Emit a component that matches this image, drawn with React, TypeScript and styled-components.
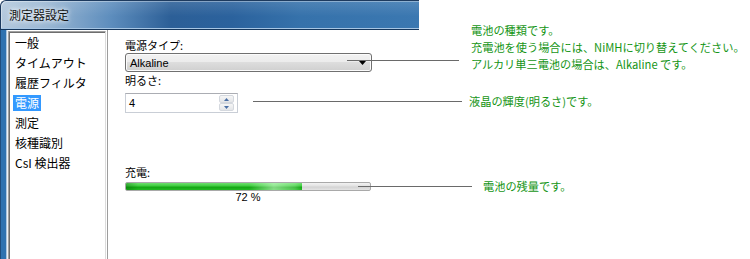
import React from 'react';
import styled, { createGlobalStyle } from 'styled-components';

const GlobalStyle = createGlobalStyle`
  html, body {
    margin: 0;
    padding: 0;
    background: #fff;
  }
  body {
    font-family: "Liberation Sans", "Noto Sans CJK JP", sans-serif;
    color: #000;
  }
`;

const Stage = styled.div`
  position: relative;
  width: 750px;
  height: 259px;
  overflow: hidden;
  background: #fff;
`;

const Window = styled.div`
  width: 419px;
  height: 100%;
  display: flex;
  flex-direction: column;
`;

const TitleBar = styled.div`
  box-sizing: border-box;
  flex: none;
  height: 30px;
  display: flex;
  align-items: center;
  padding: 0 0 1px 8px;
  border-top: 1px solid #1d3a5e;
  border-left: 1px solid #1d3a5e;
  border-bottom: 1px solid #16375c;
  border-top-left-radius: 6px;
  box-shadow: inset 0 -1px 0 #a7c6e4, inset 1px 1px 0 rgba(255, 255, 255, 0.35);
  background:
    linear-gradient(rgba(255, 255, 255, 0.12), rgba(255, 255, 255, 0) 55%),
    linear-gradient(
      to right,
      #b4c9dd 0,
      #9ab7d3 45px,
      #5d8dbd 110px,
      #2c5f97 170px,
      #2b629d 230px,
      #3672ab 300px,
      #3b78b1 419px
    );
  color: #141414;
  font-family: "Noto Sans CJK JP", sans-serif;
  font-size: 12px;
  text-shadow: 0 0 4px #fff, 0 0 7px rgba(255, 255, 255, 0.8);
`;

const Body = styled.div`
  flex: 1;
  display: flex;
  min-height: 0;
`;

const Frame = styled.div`
  flex: none;
  width: 8px;
  background: linear-gradient(
    to right,
    #1f4d7d 0 1px,
    #2f72b0 1px 6px,
    #aac5df 6px 7px,
    #eef2f6 7px 8px
  );
`;

const ListBox = styled.ul`
  box-sizing: border-box;
  flex: none;
  width: 98px;
  margin: 1px 0 0;
  padding: 1px 0 0 4px;
  list-style: none;
  border-top: 1px solid #a0a0a0;
  border-left: 1px solid #a0a0a0;
  border-right: 1px solid #dcdcdc;
  box-shadow: inset 1px 1px 0 #6e6e6e;
  font-family: "Noto Sans CJK JP", sans-serif;
  font-size: 12px;
`;

const ListItem = styled.li`
  height: 20px;
  display: flex;
  align-items: center;
`;

const ItemLabel = styled.span<{ $selected?: boolean }>`
  padding: 0 2px;
  line-height: 16px;
  background: ${(p) => (p.$selected ? '#3399ff' : 'transparent')};
  color: ${(p) => (p.$selected ? '#fff' : '#000')};
`;

const Divider = styled.div`
  flex: none;
  width: 1px;
  margin-left: 1px;
  background: #9d9d9d;
`;

const Content = styled.div`
  flex: 1;
  display: flex;
  flex-direction: column;
  align-items: flex-start;
  padding: 9px 0 0 17px;
  font-family: "Noto Sans CJK JP", sans-serif;
  font-size: 11px;
`;

const FieldLabel = styled.div<{ $top?: number; $bottom?: number }>`
  line-height: 13px;
  margin-top: ${(p) => p.$top ?? 0}px;
  margin-bottom: ${(p) => p.$bottom ?? 0}px;
`;

const Combo = styled.div`
  box-sizing: border-box;
  width: 247px;
  height: 19px;
  display: flex;
  align-items: center;
  justify-content: space-between;
  padding: 0 5px 0 4px;
  border: 1px solid #707070;
  border-radius: 3px;
  background: linear-gradient(#f2f2f2 0, #ebebeb 50%, #dddddd 50%, #cfcfcf 100%);
  box-shadow: inset 0 0 0 1px #fbfbfb;
  font-family: "Liberation Sans", sans-serif;
  font-size: 11px;
`;

const SpinBox = styled.div`
  box-sizing: border-box;
  width: 113px;
  height: 20px;
  display: flex;
  align-items: center;
  justify-content: space-between;
  padding: 0 3px 0 3px;
  border: 1px solid #c9ced6;
  border-top-color: #abadb3;
  background: #fff;
  font-family: "Liberation Sans", sans-serif;
  font-size: 11px;
`;

const SpinButtons = styled.div`
  display: flex;
  flex-direction: column;
  width: 15px;
`;

const SpinButton = styled.div`
  box-sizing: border-box;
  height: 8px;
  display: flex;
  align-items: center;
  justify-content: center;
  border: 1px solid #d4d8de;
  border-radius: 2px;
  background: linear-gradient(#f6f6f6, #e3e5e8);
`;

const Progress = styled.div`
  box-sizing: border-box;
  width: 246px;
  height: 9px;
  margin-top: 3px;
  border: 1px solid #a9a9a9;
  border-radius: 2px;
  overflow: hidden;
  background: linear-gradient(#f2f2f2 0, #e2e2e2 45%, #d2d2d2 55%, #e4e4e4 100%);
`;

const ProgressFill = styled.div`
  height: 100%;
  background:
    linear-gradient(
      to right,
      rgba(0, 90, 0, 0.35) 0,
      rgba(0, 90, 0, 0) 12px,
      rgba(255, 255, 255, 0) 70%,
      rgba(220, 255, 220, 0.55) 84%,
      rgba(220, 255, 220, 0.25) 96%,
      rgba(255, 255, 255, 0) 100%
    ),
    linear-gradient(#6ede6e 0, #3fcd3f 40%, #13a613 60%, #22b922 100%);
`;

const Percent = styled.div`
  width: 246px;
  line-height: 13px;
  text-align: center;
  font-family: "Liberation Sans", sans-serif;
  font-size: 11px;
`;

const Leader = styled.div<{ $top: number; $left: number; $width: number }>`
  position: absolute;
  top: ${(p) => p.$top}px;
  left: ${(p) => p.$left}px;
  width: ${(p) => p.$width}px;
  height: 1px;
  background: #6a6a6a;
`;

const Note = styled.div<{ $top: number; $left: number }>`
  position: absolute;
  top: ${(p) => p.$top}px;
  left: ${(p) => p.$left}px;
  color: #159515;
  font-family: "Noto Sans CJK JP", sans-serif;
  font-size: 11.2px;
  line-height: 17px;
  white-space: nowrap;
`;

const menu = ['一般', 'タイムアウト', '履歴フィルタ', '電源', '測定', '核種識別', 'CsI 検出器'];

export default function App() {
  const charge = 72;
  return (
    <Stage>
      <GlobalStyle />
      <Window>
        <TitleBar>測定器設定</TitleBar>
        <Body>
          <Frame />
          <ListBox>
            {menu.map((m) => (
              <ListItem key={m}>
                <ItemLabel $selected={m === '電源'}>{m}</ItemLabel>
              </ListItem>
            ))}
          </ListBox>
          <Divider />
          <Content>
            <FieldLabel $bottom={1}>電源タイプ:</FieldLabel>
            <Combo>
              <span>Alkaline</span>
              <svg width="7" height="4" viewBox="0 0 7 4">
                <polygon points="0,0 7,0 3.5,4" fill="#000" />
              </svg>
            </Combo>
            <FieldLabel $top={2} $bottom={6}>明るさ:</FieldLabel>
            <SpinBox>
              <span>4</span>
              <SpinButtons>
                <SpinButton>
                  <svg width="5" height="3" viewBox="0 0 5 3">
                    <polygon points="2.5,0 5,3 0,3" fill="#4a6fa5" />
                  </svg>
                </SpinButton>
                <SpinButton>
                  <svg width="5" height="3" viewBox="0 0 5 3">
                    <polygon points="0,0 5,0 2.5,3" fill="#4a6fa5" />
                  </svg>
                </SpinButton>
              </SpinButtons>
            </SpinBox>
            <FieldLabel $top={53}>充電:</FieldLabel>
            <Progress>
              <ProgressFill style={{ width: `${charge}%` }} />
            </Progress>
            <Percent>{charge} %</Percent>
          </Content>
        </Body>
      </Window>

      <Leader $top={60} $left={347} $width={112} />
      <Note $top={22} $left={471}>
        電池の種類です。
        <br />
        充電池を使う場合には、NiMHに切り替えてください。
        <br />
        アルカリ単三電池の場合は、Alkaline です。
      </Note>

      <Leader $top={101} $left={253} $width={209} />
      <Note $top={93} $left={469}>液晶の輝度(明るさ)です。</Note>

      <Leader $top={186} $left={358} $width={114} />
      <Note $top={178} $left={483}>電池の残量です。</Note>
    </Stage>
  );
}
